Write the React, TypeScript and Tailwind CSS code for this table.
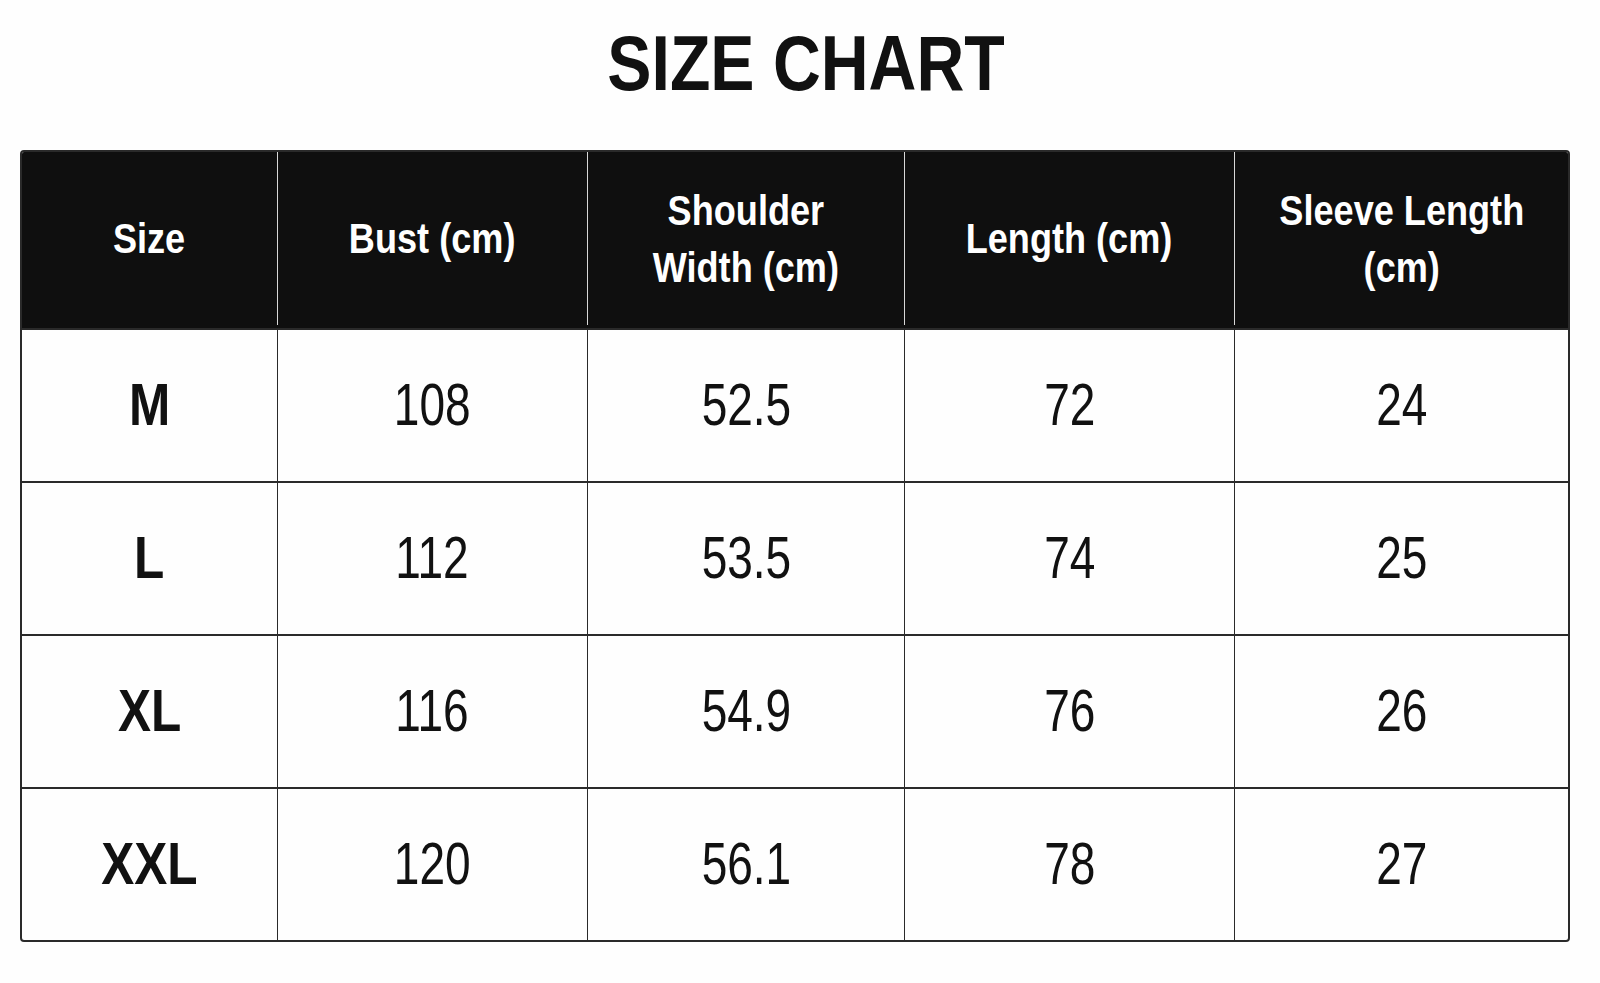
import React from "react";

const font = "'Liberation Sans', Arial, sans-serif";

const rows = [
  ["M", "108", "52.5", "72", "24"],
  ["L", "112", "53.5", "74", "25"],
  ["XL", "116", "54.9", "76", "26"],
  ["XXL", "120", "56.1", "78", "27"],
];

function Head({ children, first }: { children: React.ReactNode; first?: boolean }) {
  return (
    <div
      className={
        first
          ? "flex items-center justify-center text-center"
          : "flex items-center justify-center text-center border-l-[1.5px] border-[#d8d8d8]"
      }
    >
      <span className="inline-block scale-x-[0.84] whitespace-nowrap">{children}</span>
    </div>
  );
}

export default function App() {
  return (
    <div className="w-[1600px] h-[983px] bg-[#fefefe] overflow-hidden" style={{ fontFamily: font }}>
      <div className="h-[150px] flex items-start justify-center pl-[12px]">
        <h1 className="mt-[18px] text-[77px] leading-[90px] font-bold text-[#111]">
          <span className="inline-block scale-x-[0.86] whitespace-nowrap">SIZE CHART</span>
        </h1>
      </div>
      <div className="ml-[20px] w-[1550px] border-2 border-[#2a2a2a] rounded-[4px] overflow-hidden">
        <div className="grid grid-cols-[255px_310px_317px_330px_1fr] h-[176px] bg-[#0f0f0f] text-white font-bold text-[43px] leading-[57px] pb-[3px]">
          <Head first>Size</Head>
          <Head>Bust (cm)</Head>
          <Head>
            Shoulder
            <br />
            Width (cm)
          </Head>
          <Head>Length (cm)</Head>
          <Head>
            Sleeve Length
            <br />
            (cm)
          </Head>
        </div>
        {rows.map((r, i) => (
          <div
            key={i}
            className="grid grid-cols-[255px_310px_317px_330px_1fr] h-[153px] border-t-2 border-[#2a2a2a] text-[#111] text-[59px]"
          >
            {r.map((c, j) => (
              <div
                key={j}
                className={
                  j === 0
                    ? "flex items-center justify-center font-bold"
                    : "flex items-center justify-center border-l-[1.5px] border-[#2a2a2a]"
                }
              >
                <span className={j === 0 ? "inline-block scale-x-[0.84]" : "inline-block scale-x-[0.78]"}>{c}</span>
              </div>
            ))}
          </div>
        ))}
      </div>
    </div>
  );
}
